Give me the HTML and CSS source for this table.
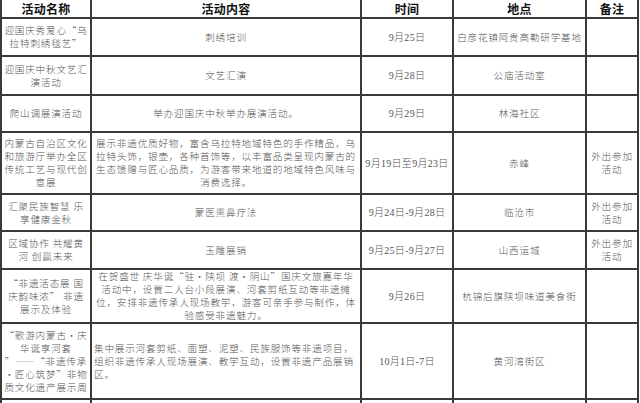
FILE: index.html
```html
<!DOCTYPE html>
<html lang="zh-CN">
<head>
<meta charset="utf-8">
<title>活动安排表</title>
<link rel="stylesheet" href="styles.css">
</head>
<body>
<table class="sheet">
  <colgroup>
    <col class="c-name">
    <col class="c-content">
    <col class="c-time">
    <col class="c-place">
    <col class="c-note">
  </colgroup>
  <thead>
    <tr class="head">
      <th>活动名称</th>
      <th>活动内容</th>
      <th>时间</th>
      <th>地点</th>
      <th>备注</th>
    </tr>
  </thead>
  <tbody>
    <tr class="r38">
      <td>迎国庆秀爱心“乌<br>拉特刺绣毯艺”</td>
      <td>刺绣培训</td>
      <td class="time">9月25日</td>
      <td>白彦花镇阿贵高勒研学基地</td>
      <td></td>
    </tr>
    <tr class="r39">
      <td>迎国庆中秋文艺汇<br>演活动</td>
      <td>文艺汇演</td>
      <td class="time">9月28日</td>
      <td>公庙活动室</td>
      <td></td>
    </tr>
    <tr class="r37">
      <td>爬山调展演活动</td>
      <td>举办迎国庆中秋举办展演活动。</td>
      <td class="time">9月29日</td>
      <td>林海社区</td>
      <td></td>
    </tr>
    <tr class="r62">
      <td>内蒙古自治区文化<br>和旅游厅举办全区<br>传统工艺与现代创<br>意展</td>
      <td>展示非遗优质好物，富含乌拉特地域特色的手作精品，乌<br>拉特头饰，银壶，各种首饰等，以丰富品类呈现内蒙古的<br>生态馈赠与匠心品质，为游客带来地道的地域特色风味与<br>消费选择。</td>
      <td class="time">9月19日至9月23日</td>
      <td>赤峰</td>
      <td>外出参加<br>活动</td>
    </tr>
    <tr class="r37">
      <td>汇聚民族智慧 乐<br>享健康金秋</td>
      <td>蒙医熏鼻疗法</td>
      <td class="time">9月24日-9月28日</td>
      <td>临沧市</td>
      <td>外出参加<br>活动</td>
    </tr>
    <tr class="r38">
      <td>区域协作 共耀黄<br>河 创赢未来</td>
      <td>玉雕展销</td>
      <td class="time">9月25日-9月27日</td>
      <td>山西运城</td>
      <td>外出参加<br>活动</td>
    </tr>
    <tr class="r54">
      <td>“非遗活态展 国<br>庆韵味浓” 非遗<br>展示及体验</td>
      <td>在贺盛世 庆华诞“驻•陕坝 渡•阴山”国庆文旅嘉年华<br>活动中，设置二人台小段展演、河套剪纸互动等非遗摊<br>位，安排非遗传承人现场教学，游客可亲手参与制作，体<br>验感受非遗魅力。</td>
      <td class="time">9月26日</td>
      <td>杭锦后旗陕坝味道美食街</td>
      <td></td>
    </tr>
    <tr class="r76">
      <td>“歌游内蒙古•庆<br>华诞享河套<br>”——“非遗传承<br>•匠心筑梦”非物<br>质文化遗产展示周</td>
      <td class="left">集中展示河套剪纸、面塑、泥塑、民族服饰等非遗项目，<br>组织非遗传承人现场展演、教学互动，设置非遗产品展销<br>区。</td>
      <td class="time">10月1日-7日</td>
      <td>黄河湾街区</td>
      <td></td>
    </tr>
    <tr class="r20">
      <td></td>
      <td></td>
      <td></td>
      <td></td>
      <td></td>
    </tr>
  </tbody>
</table>
</body>
</html>
```

FILE: styles.css
```css
html, body {
  margin: 0;
  padding: 0;
  background: #ffffff;
}

body {
  width: 640px;
  height: 403px;
  overflow: hidden;
}

.sheet {
  border-collapse: collapse;
  table-layout: fixed;
  width: 637px;
  font-family: "Noto Sans CJK SC", "Noto Sans", sans-serif;
}

.c-name { width: 90px; }
.c-content { width: 270px; }
.c-time { width: 92px; }
.c-place { width: 133px; }
.c-note { width: 52px; }

.sheet th,
.sheet td {
  border: 2px solid #3a3a3a;
  padding: 0 2px;
  text-align: center;
  vertical-align: middle;
  white-space: nowrap;
  overflow: hidden;
}

.sheet th {
  border-top: none;
  font-size: 12px;
  font-weight: 700;
  letter-spacing: 0.3px;
  color: #111111;
  line-height: 14px;
}

.sheet td {
  font-size: 9.6px;
  font-weight: 300;
  letter-spacing: 0.8px;
  line-height: 13px;
  color: #555555;
}

.sheet td.time {
  font-family: "Liberation Serif", "Noto Sans CJK SC", serif;
  font-size: 10px;
  letter-spacing: 0.3px;
}

.sheet td.left {
  text-align: left;
}

.head { height: 18px; }
.r37 { height: 37px; }
.r38 { height: 38px; }
.r39 { height: 39px; }
.r54 { height: 54px; }
.r62 { height: 62px; }
.r76 { height: 76px; }
.r20 { height: 20px; }
```
